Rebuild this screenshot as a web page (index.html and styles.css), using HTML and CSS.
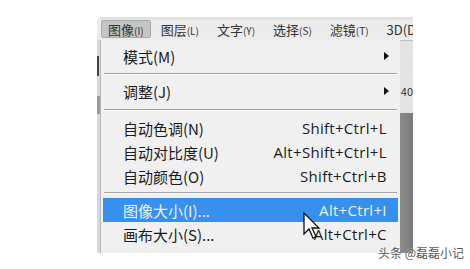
FILE: index.html
```html
<!DOCTYPE html>
<html lang="zh-CN">
<head>
    <meta charset="UTF-8">
    <title>图像菜单</title>
    <link rel="stylesheet" href="styles.css">
</head>
<body>

    <div class="window">
        <!-- Menu bar -->
        <div class="menubar">
            <span class="menubar-item active">图像<small>(I)</small></span>
            <span class="menubar-item">图层<small>(L)</small></span>
            <span class="menubar-item">文字<small>(Y)</small></span>
            <span class="menubar-item">选择<small>(S)</small></span>
            <span class="menubar-item">滤镜<small>(T)</small></span>
            <span class="menubar-item">3D(D)</span>
        </div>

        <div class="workspace">
            <div class="left-strip">
                <div class="strip-mark"></div>
                <div class="strip-dark"></div>
                <div class="strip-blue"></div>
            </div>

            <!-- Dropdown menu -->
            <div class="dropdown">
                <div class="menu-item">
                    <span class="label">模式(M)</span>
                    <span class="arrow"></span>
                </div>
                <div class="separator"></div>
                <div class="menu-item">
                    <span class="label">调整(J)</span>
                    <span class="arrow"></span>
                </div>
                <div class="separator sep-wide"></div>
                <div class="menu-item">
                    <span class="label">自动色调(N)</span>
                    <span class="shortcut">Shift+Ctrl+L</span>
                </div>
                <div class="menu-item">
                    <span class="label">自动对比度(U)</span>
                    <span class="shortcut">Alt+Shift+Ctrl+L</span>
                </div>
                <div class="menu-item">
                    <span class="label">自动颜色(O)</span>
                    <span class="shortcut">Shift+Ctrl+B</span>
                </div>
                <div class="separator sep-narrow"></div>
                <div class="menu-item selected">
                    <span class="label">图像大小(I)...</span>
                    <span class="shortcut">Alt+Ctrl+I</span>
                </div>
                <div class="menu-item">
                    <span class="label">画布大小(S)...</span>
                    <span class="shortcut">Alt+Ctrl+C</span>
                </div>
            </div>

            <div class="right-strip">
                <div class="strip-top"><span>40</span></div>
                <div class="strip-bottom"></div>
            </div>
        </div>
    </div>

    <!-- Mouse cursor -->
    <svg class="cursor" width="18" height="28" viewBox="0 0 18 28">
        <path d="M1 1 L1 22 L6 17 L10 26 L13 24.5 L9 16 L16 16 Z" fill="#fff" stroke="#111" stroke-width="1.3" stroke-linejoin="miter"/>
    </svg>

    <div class="watermark">头条 @磊磊小记</div>

</body>
</html>
```

FILE: styles.css
```css
/* Page */
body {
    margin: 0;
    background: #fff;
    font-family: "Noto Sans CJK SC", "Noto Sans", sans-serif;
    color: #1b1b1b;
    width: 470px;
    height: 269px;
    overflow: hidden;
    position: relative;
}

/* Screenshot window */
.window {
    margin: 17px 0 0 97px;
    width: 316px;
    height: 236px;
    display: flex;
    flex-direction: column;
    border-top-left-radius: 6px;
    overflow: hidden;
    background: #d8d8d8;
}

/* Top menu bar */
.menubar {
    height: 23px;
    background: linear-gradient(to bottom, #dcdcdc, #ebebeb 4px, #ececec);
    display: flex;
    align-items: center;
    padding-left: 4px;
    font-size: 13px;
    color: #333;
    white-space: nowrap;
}

.menubar-item {
    height: 18px;
    line-height: 18px;
    padding: 0 6px;
    margin-right: 4px;
    box-sizing: border-box;
    border: 1px solid transparent;
}

.menubar-item small {
    font-size: 10px;
}

.menubar-item.active {
    background: #c5c5c5;
    border-color: #a9a9a9;
    border-radius: 2px;
    width: 51px;
    margin-right: 3px;
}

/* Area below menu bar */
.workspace {
    flex: 1;
    display: flex;
}

.left-strip {
    width: 3px;
    background: #d9d9d9;
    border-right: 1px solid #b8b8b8;
    display: flex;
    flex-direction: column;
}

.strip-mark {
    height: 20px;
    margin-top: 16px;
    border-left: 2px solid #444;
}

.strip-dark {
    height: 18px;
    margin-top: 20px;
    background: #9a9a9a;
}

.strip-blue {
    height: 26px;
    margin-top: 82px;
    background: #c9d9f2;
}

/* Dropdown */
.dropdown {
    width: 304px;
    background: #f0f0f0;
    padding: 4px 0 0 0;
    box-sizing: border-box;
}

.menu-item {
    height: 24px;
    display: flex;
    align-items: center;
    justify-content: space-between;
    padding: 0 11px 0 20px;
    margin: 0 2px;
    font-size: 15px;
    white-space: nowrap;
}

.menu-item.selected {
    background: #3790ee;
    color: #eef5ff;
}

.arrow {
    width: 0;
    height: 0;
    border-top: 4px solid transparent;
    border-bottom: 4px solid transparent;
    border-left: 5px solid #111;
    margin-right: -2px;
}

.shortcut {
    font-family: "Open Sans", "Noto Sans", sans-serif;
    font-size: 15px;
    letter-spacing: 0.3px;
}

/* Separators */
.separator {
    height: 11px;
    display: flex;
    align-items: center;
    padding: 0 3px 0 3px;
}

.separator::before {
    content: "";
    flex: 1;
    border-top: 1px solid #a4a4a4;
    border-bottom: 1px solid #fbfbfb;
}

.sep-wide {
    height: 13px;
}

.sep-narrow {
    height: 10px;
}

/* Right strip */
.right-strip {
    flex: 1;
    display: flex;
    flex-direction: column;
}

.strip-top {
    height: 72px;
    background: #e4e4e4;
    border-top: 1px solid #bdbdbd;
    font-size: 11px;
    color: #333;
    overflow: hidden;
}

.strip-top span {
    display: block;
    margin-top: 42px;
    margin-left: 1px;
}

.strip-bottom {
    flex: 1;
    background: linear-gradient(to right, #8c8c8c, #7a7a7a);
}

/* Cursor overlay */
.cursor {
    position: absolute;
    left: 303px;
    top: 212px;
}

/* Watermark overlay */
.watermark {
    position: absolute;
    left: 378px;
    top: 244px;
    font-size: 12px;
    color: #5a5a5a;
    text-shadow: 0 0 2px #fff;
    white-space: nowrap;
}
```
